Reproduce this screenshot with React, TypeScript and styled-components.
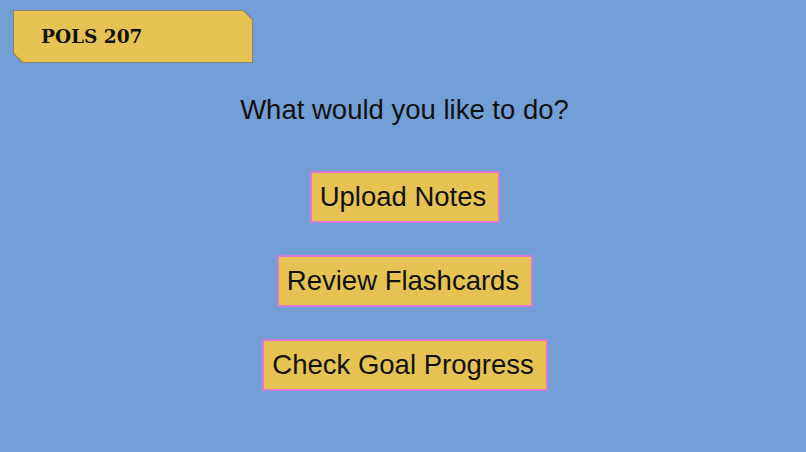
import styled, { createGlobalStyle } from "styled-components"

const GlobalStyle = createGlobalStyle`
  html, body {
    margin: 0;
    padding: 0;
    background: #729fd5;
  }
  body {
    font-family: "Liberation Sans", Arial, sans-serif;
  }
`

const Page = styled.div`
  width: 806px;
  height: 452px;
  background: #729fd5;
  padding: 10px 0 0 13px;
  box-sizing: border-box;
`

const cut = `polygon(0 0, calc(100% - 9px) 0, 100% 9px, 100% 100%, 9px 100%, 0 calc(100% - 9px))`

const Badge = styled.div`
  width: 240px;
  height: 53px;
  background: #8a8470;
  clip-path: ${cut};
  padding: 1px;
  box-sizing: border-box;
`

const BadgeInner = styled.div`
  height: 100%;
  background: #e6c252;
  clip-path: ${cut};
  display: flex;
  align-items: center;
  padding-left: 27px;
  font-family: "DejaVu Serif", "Liberation Serif", serif;
  font-weight: bold;
  font-size: 18.5px;
  color: #111;
`

const Main = styled.div`
  display: flex;
  flex-direction: column;
  align-items: center;
  margin-left: -13px;
`

const Heading = styled.h1`
  margin: 24px 0 0;
  font-weight: normal;
  font-size: 27.5px;
  line-height: 46px;
  color: #111;
  margin-left: 3px;
`

const Buttons = styled.div`
  display: flex;
  flex-direction: column;
  align-items: center;
  gap: 32px;
  margin-top: 38px;
  margin-left: 4px;
`

const ActionButton = styled.button`
  height: 52px;
  padding: 0 12px 0 8px;
  background: #e6c252;
  border: 2px solid #d97ad4;
  border-radius: 0;
  font-family: "Liberation Sans", Arial, sans-serif;
  font-size: 27.5px;
  color: #111;
  cursor: pointer;
`

const App = () => {
  return (
    <>
      <GlobalStyle />
      <Page>
        <Badge>
          <BadgeInner>POLS 207</BadgeInner>
        </Badge>
        <Main>
          <Heading>What would you like to do?</Heading>
          <Buttons>
            <ActionButton>Upload Notes</ActionButton>
            <ActionButton>Review Flashcards</ActionButton>
            <ActionButton>Check Goal Progress</ActionButton>
          </Buttons>
        </Main>
      </Page>
    </>
  )
}

export default App
